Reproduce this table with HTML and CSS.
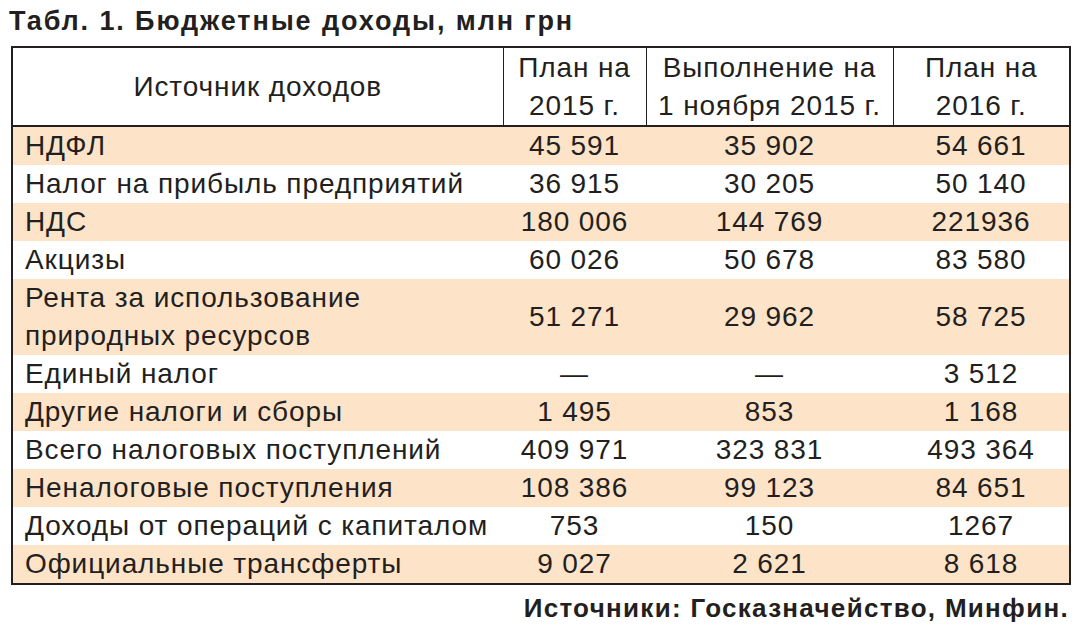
FILE: index.html
```html
<!DOCTYPE html>
<html lang="ru">
<head>
<meta charset="utf-8">
<link rel="stylesheet" href="styles.css">
</head>
<body>
<div class="page">
  <h1 class="title">Табл. 1. Бюджетные доходы, млн грн</h1>
  <table class="tbl">
    <colgroup>
      <col class="c1"><col class="c2"><col class="c3"><col class="c4">
    </colgroup>
    <thead>
      <tr>
        <th>Источник доходов</th>
        <th>План на<br>2015 г.</th>
        <th>Выполнение на<br>1 ноября 2015 г.</th>
        <th>План на<br>2016 г.</th>
      </tr>
    </thead>
    <tbody>
      <tr class="hl"><td>НДФЛ</td><td>45 591</td><td>35 902</td><td>54 661</td></tr>
      <tr><td>Налог на прибыль предприятий</td><td>36 915</td><td>30 205</td><td>50 140</td></tr>
      <tr class="hl"><td>НДС</td><td>180 006</td><td>144 769</td><td>221936</td></tr>
      <tr><td>Акцизы</td><td>60 026</td><td>50 678</td><td>83 580</td></tr>
      <tr class="hl"><td>Рента за использование<br>природных ресурсов</td><td>51 271</td><td>29 962</td><td>58 725</td></tr>
      <tr><td>Единый налог</td><td>—</td><td>—</td><td>3 512</td></tr>
      <tr class="hl"><td>Другие налоги и сборы</td><td>1 495</td><td>853</td><td>1 168</td></tr>
      <tr><td>Всего налоговых поступлений</td><td>409 971</td><td>323 831</td><td>493 364</td></tr>
      <tr class="hl"><td>Неналоговые поступления</td><td>108 386</td><td>99 123</td><td>84 651</td></tr>
      <tr><td>Доходы от операций с капиталом</td><td>753</td><td>150</td><td>1267</td></tr>
      <tr class="hl"><td>Официальные трансферты</td><td>9 027</td><td>2 621</td><td>8 618</td></tr>
    </tbody>
  </table>
  <p class="source">Источники: Госказначейство, Минфин.</p>
</div>
</body>
</html>
```

FILE: styles.css
```css
* { box-sizing: border-box; }
html, body { margin: 0; padding: 0; background: #ffffff; }
body {
  font-family: "Liberation Sans", Arial, sans-serif;
  color: #231f20;
}
.page {
  width: 1085px;
  height: 627px;
  padding: 4px 16px 0 11px;
}
.title {
  margin: 0 0 0 -2px;
  font-size: 27px;
  font-weight: bold;
  letter-spacing: 1.9px;
  line-height: 34px;
  height: 42px;
  color: #231f20;
}
.tbl {
  border-collapse: collapse;
  width: 1058px;
  table-layout: fixed;
  border: 2.5px solid #231f20;
  font-size: 28px;
  letter-spacing: 0.9px;
}
.c1 { width: 491px; }
.c2 { width: 143px; }
.c3 { width: 247px; }
.c4 { width: 177px; }
.tbl th {
  font-weight: normal;
  text-align: center;
  line-height: 38px;
  height: 79px;
  padding: 0;
  border-left: 1.5px solid #231f20;
  border-bottom: 2px solid #231f20;
}
.tbl th:first-child { border-left: none; }
.tbl td {
  text-align: center;
  line-height: 38px;
  padding: 0;
  white-space: nowrap;
}
.tbl td:first-child {
  text-align: left;
  padding-left: 12px;
}
.tbl tr.hl td { background: #fde3c8; }
.source {
  margin: 6px 0 0 0;
  text-align: right;
  font-size: 26px;
  font-weight: bold;
  letter-spacing: 1.3px;
  line-height: 34px;
}
```
